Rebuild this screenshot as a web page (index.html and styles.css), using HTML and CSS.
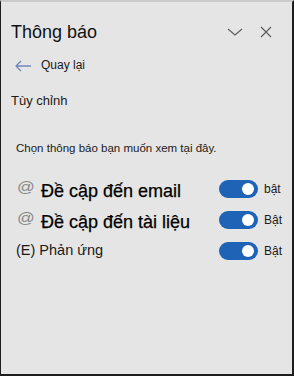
FILE: index.html
```html
<!DOCTYPE html>
<html lang="vi">
<head>
<meta charset="utf-8">
<link rel="stylesheet" href="styles.css">
</head>
<body>
<div class="panel">
  <div class="header">
    <div class="title">Thông báo</div>
    <svg class="chev" width="16" height="16" viewBox="0 0 16 16"><path d="M1 5 L8 11 L15 5" fill="none" stroke="#5f5f5f" stroke-width="1.2"/></svg>
    <svg class="close" width="16" height="16" viewBox="0 0 16 16"><path d="M3 3 L13 13 M13 3 L3 13" fill="none" stroke="#5f5f5f" stroke-width="1.2"/></svg>
  </div>
  <div class="back">
    <svg class="arrow" width="16" height="12" viewBox="0 0 16 12"><path d="M16 6 H1 M6 1 L1 6 L6 11" fill="none" stroke="#7186bd" stroke-width="1.3"/></svg>
    <span>Quay lại</span>
  </div>
  <div class="section">Tùy chỉnh</div>
  <div class="desc">Chọn thông báo bạn muốn xem tại đây.</div>
  <div class="rows">
    <div class="row">
      <span class="at">@</span>
      <span class="label big">Đề cập đến email</span>
      <span class="toggle"><span class="knob"></span></span>
      <span class="state">bật</span>
    </div>
    <div class="row">
      <span class="at">@</span>
      <span class="label big">Đề cập đến tài liệu</span>
      <span class="toggle"><span class="knob"></span></span>
      <span class="state">Bật</span>
    </div>
    <div class="row">
      <span class="label small">(E) Phản ứng</span>
      <span class="toggle"><span class="knob"></span></span>
      <span class="state">Bật</span>
    </div>
  </div>
</div>
</body>
</html>
```
FILE: styles.css
```css
* { box-sizing: border-box; }
html, body { margin: 0; padding: 0; }
body {
  font-family: "Liberation Sans", Arial, sans-serif;
  color: #1b1a19;
  background: #e5e5e5;
}
.panel {
  width: 294px;
  height: 376px;
  background: #e5e5e5;
  border-top: 2px solid #cbcbcb;
  border-left: 1px solid #1e1e1e;
  border-right: 2px solid #1e1e1e;
  border-bottom: 2px solid #1e1e1e;
  display: flex;
  flex-direction: column;
}
.header {
  display: flex;
  align-items: center;
  padding: 19px 18px 0 10px;
}
.title {
  font-size: 18px;
  line-height: 22px;
  color: #111;
}
.chev { margin-left: auto; }
.close { margin-left: 15px; }
.back {
  display: flex;
  align-items: center;
  margin-top: 14px;
  padding-left: 14px;
  font-size: 12px;
  line-height: 14px;
  color: #1b1a19;
}
.arrow { margin-top: 3px; margin-right: 10px; }
.section {
  margin-top: 21px;
  padding-left: 10px;
  font-size: 13px;
  line-height: 15px;
  color: #231a14;
}
.desc {
  margin-top: 34px;
  padding-left: 15px;
  font-size: 11.5px;
  line-height: 13px;
  color: #1b1a19;
}
.rows {
  margin-top: 18px;
  display: flex;
  flex-direction: column;
}
.row {
  height: 31px;
  display: flex;
  align-items: center;
  padding-left: 16px;
}
.at {
  width: 24px;
  font-size: 14px;
  line-height: 16px;
  color: #888;
  display: inline-block;
  transform: scaleX(1.25);
  transform-origin: left center;
  margin-top: -4px;
}
.label { flex: 1; color: #000; }
.big {
  font-size: 18px;
  line-height: 22px;
  margin-top: 5px;
  -webkit-text-stroke: 0.25px #000;
}
.small {
  font-size: 14.5px;
  line-height: 17px;
  margin-left: -1px;
  color: #1b1a19;
}
.toggle {
  width: 39px;
  height: 18px;
  border-radius: 9px;
  background: #1f63b6;
  display: flex;
  align-items: center;
  justify-content: flex-end;
  padding-right: 4px;
}
.knob {
  width: 12px;
  height: 12px;
  border-radius: 50%;
  background: #fff;
}
.state {
  width: 28px;
  margin-left: 6px;
  font-size: 12px;
  line-height: 14px;
  color: #1b1a19;
}
```
